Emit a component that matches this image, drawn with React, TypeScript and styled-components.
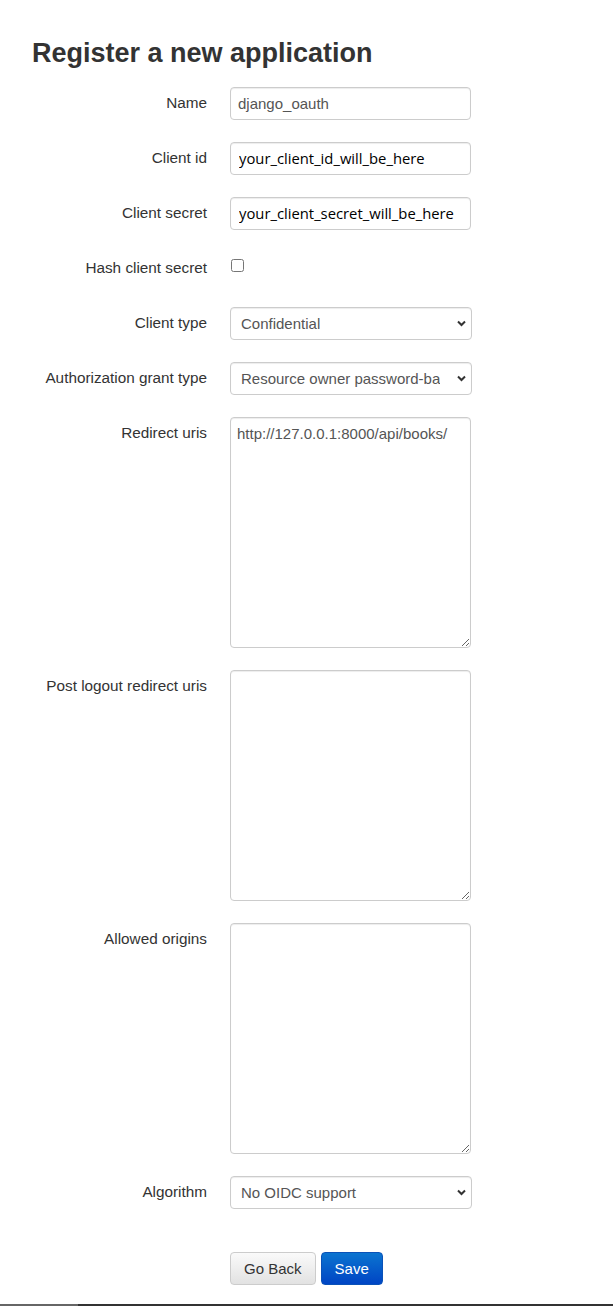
import * as React from 'react';
import styled, { createGlobalStyle } from 'styled-components';

const GlobalStyle = createGlobalStyle`
    html, body {
        margin: 0;
        padding: 0;
        background: #fff;
    }
    body {
        font-family: "Liberation Sans", Arial, Helvetica, sans-serif;
        font-size: 15px;
        color: #333;
    }
    * {
        box-sizing: border-box;
    }
`;

const Page = styled.div`
    min-height: 1306px;
    display: flex;
    flex-direction: column;
`;

const Content = styled.div`
    flex: 1;
    padding: 39px 32px 0 32px;
`;

const Title = styled.h2`
    margin: 0 0 18px 0;
    font-size: 27px;
    line-height: 1.1;
    font-weight: bold;
    color: #333;
`;

const Form = styled.form`
    display: grid;
    grid-template-columns: 175px 241px;
    column-gap: 23px;
    row-gap: 22px;
    align-items: start;
`;

const Label = styled.label`
    text-align: right;
    padding-top: 5px;
    line-height: 21px;
    font-size: 15.3px;
    color: #333;
`;

const fieldBase = `
    display: block;
    width: 241px;
    border: 1px solid #ccc;
    border-radius: 4px;
    background: #fff;
    box-shadow: inset 0 1px 1px rgba(0,0,0,.075);
    font-family: "Liberation Sans", Arial, Helvetica, sans-serif;
    font-size: 15px;
    color: #555;
    outline: none;
`;

const TextInput = styled.input<{ $code?: boolean }>`
    ${fieldBase}
    height: 33px;
    padding: 0 7px;
    ${(p) => p.$code && `
        font-family: "Open Sans", "Noto Sans", sans-serif;
        font-size: 14.8px;
        color: #000;
        padding: 0 8px;
    `}
`;

const TextArea = styled.textarea`
    ${fieldBase}
    height: 231px;
    padding: 5px 6px;
    line-height: 21px;
    resize: vertical;
`;

const SelectWrap = styled.div`
    position: relative;
    width: 242px;
`;

const Select = styled.select`
    ${fieldBase}
    width: 242px;
    height: 33px;
    padding: 0 31px 0 10px;
    appearance: none;
    -webkit-appearance: none;
`;

const Chevron = styled.svg`
    position: absolute;
    right: 6px;
    top: 13px;
    width: 9px;
    height: 7px;
    pointer-events: none;
`;

const CheckCell = styled.div`
    height: 33px;
    padding-top: 6px;
`;

const Checkbox = styled.input`
    margin: 0 0 0 1px;
    width: 13px;
    height: 13px;
`;

const Actions = styled.div`
    grid-column: 2;
    display: flex;
    gap: 5px;
    margin-top: 21px;
`;

const Button = styled.button<{ $primary?: boolean }>`
    height: 33px;
    padding: 0 13px;
    border-radius: 4px;
    font-family: "Liberation Sans", Arial, Helvetica, sans-serif;
    font-size: 15px;
    cursor: pointer;
    border: 1px solid ${(p) => (p.$primary ? '#0a52b8' : '#ccc')};
    color: ${(p) => (p.$primary ? '#fff' : '#333')};
    background: ${(p) =>
        p.$primary
            ? 'linear-gradient(to bottom, #0b74d0 0%, #0045c4 100%)'
            : 'linear-gradient(to bottom, #fafafa 0%, #e2e2e2 100%)'};
`;

const BottomEdge = styled.div`
    height: 2px;
    margin-top: 19px;
    background: #333;
    display: flex;
`;

const EdgeSegment = styled.div`
    width: 78px;
    background: #666;
`;

const ChevronIcon = () => (
    <Chevron viewBox="0 0 9 7">
        <path d="M1 1.5 L4.5 5 L8 1.5" fill="none" stroke="#333" strokeWidth="2" />
    </Chevron>
);

type SelectFieldProps = { value: string; options: string[] };

const SelectField: React.FC<SelectFieldProps> = ({ value, options }) => (
    <SelectWrap>
        <Select defaultValue={value}>
            {options.map((o) => (
                <option key={o} value={o}>{o}</option>
            ))}
        </Select>
        <ChevronIcon />
    </SelectWrap>
);

export default function App() {
    return (
        <Page>
            <GlobalStyle />
            <Content>
                <Title>Register a new application</Title>
                <Form onSubmit={(e) => e.preventDefault()}>
                    <Label>Name</Label>
                    <TextInput defaultValue="django_oauth" />

                    <Label>Client id</Label>
                    <TextInput $code defaultValue="your_client_id_will_be_here" />

                    <Label>Client secret</Label>
                    <TextInput $code defaultValue="your_client_secret_will_be_here" />

                    <Label>Hash client secret</Label>
                    <CheckCell>
                        <Checkbox type="checkbox" />
                    </CheckCell>

                    <Label>Client type</Label>
                    <SelectField value="Confidential" options={['Confidential', 'Public']} />

                    <Label>Authorization grant type</Label>
                    <SelectField
                        value="Resource owner password-based"
                        options={['Authorization code', 'Implicit', 'Resource owner password-based', 'Client credentials']}
                    />

                    <Label>Redirect uris</Label>
                    <TextArea defaultValue="http://127.0.0.1:8000/api/books/" />

                    <Label>Post logout redirect uris</Label>
                    <TextArea />

                    <Label>Allowed origins</Label>
                    <TextArea />

                    <Label>Algorithm</Label>
                    <SelectField value="No OIDC support" options={['No OIDC support', 'RSA with SHA-2 256', 'HMAC with SHA-2 256']} />

                    <Actions>
                        <Button type="button">Go Back</Button>
                        <Button type="submit" $primary>Save</Button>
                    </Actions>
                </Form>
            </Content>
            <BottomEdge>
                <EdgeSegment />
            </BottomEdge>
        </Page>
    );
}
